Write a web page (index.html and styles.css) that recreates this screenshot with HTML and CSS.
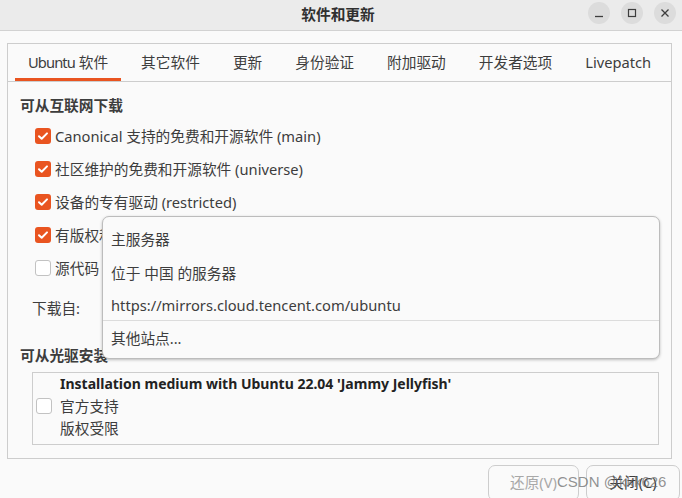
FILE: index.html
```html
<!DOCTYPE html>
<html lang="zh-CN">
  <head>
    <meta charset="UTF-8" />
    <meta name="viewport" content="width=device-width, initial-scale=1.0" />
    <title>软件和更新</title>
    <link rel="stylesheet" href="styles.css">
  </head>
  <body>
    <header class="titlebar">
      <div></div>
      <h1 class="title">软件和更新</h1>
      <div class="controls">
        <span class="ctl">
          <svg width="22" height="22" viewBox="0 0 22 22"><path d="M7 14.5h8" stroke="#3d3d3d" stroke-width="1.3" fill="none"/></svg>
        </span>
        <span class="ctl">
          <svg width="22" height="22" viewBox="0 0 22 22"><rect x="7.5" y="7.5" width="7" height="7" stroke="#3d3d3d" stroke-width="1.2" fill="none"/></svg>
        </span>
        <span class="ctl">
          <svg width="22" height="22" viewBox="0 0 22 22"><path d="M7.5 7.5l7 7M14.5 7.5l-7 7" stroke="#3d3d3d" stroke-width="1.3" fill="none"/></svg>
        </span>
      </div>
    </header>

    <main class="content">
      <div class="notebook">
        <nav class="tabs">
          <span class="tab active"><span class="narrow">Ubuntu</span> 软件</span>
          <span class="tab">其它软件</span>
          <span class="tab">更新</span>
          <span class="tab">身份验证</span>
          <span class="tab">附加驱动</span>
          <span class="tab">开发者选项</span>
          <span class="tab">Livepatch</span>
        </nav>

        <section class="page">
          <h2 class="section-title">可从互联网下载</h2>
          <ul class="options">
            <li class="option">
              <span class="check on"><svg width="16" height="16" viewBox="0 0 16 16"><path d="M4 8.2l2.7 2.6L12 5.4" stroke="#fff" stroke-width="2" fill="none" stroke-linecap="round" stroke-linejoin="round"/></svg></span>
              Canonical 支持的免费和开源软件 (main)
            </li>
            <li class="option">
              <span class="check on"><svg width="16" height="16" viewBox="0 0 16 16"><path d="M4 8.2l2.7 2.6L12 5.4" stroke="#fff" stroke-width="2" fill="none" stroke-linecap="round" stroke-linejoin="round"/></svg></span>
              社区维护的免费和开源软件 (universe)
            </li>
            <li class="option">
              <span class="check on"><svg width="16" height="16" viewBox="0 0 16 16"><path d="M4 8.2l2.7 2.6L12 5.4" stroke="#fff" stroke-width="2" fill="none" stroke-linecap="round" stroke-linejoin="round"/></svg></span>
              设备的专有驱动 (restricted)
            </li>
            <li class="option">
              <span class="check on"><svg width="16" height="16" viewBox="0 0 16 16"><path d="M4 8.2l2.7 2.6L12 5.4" stroke="#fff" stroke-width="2" fill="none" stroke-linecap="round" stroke-linejoin="round"/></svg></span>
              有版权和法律限制的软件 (multiverse)
            </li>
            <li class="option">
              <span class="check"></span>
              源代码
            </li>
          </ul>

          <div class="source-row">
            <span class="source-label">下载自:</span>
            <div class="combo"></div>
          </div>

          <h2 class="section-title cd-title">可从光驱安装</h2>
          <div class="cdrom">
            <span class="check"></span>
            <div class="cdrom-text">
              <div class="medium">Installation medium with Ubuntu 22.04 'Jammy Jellyfish'</div>
              <div>官方支持</div>
              <div>版权受限</div>
            </div>
          </div>
        </section>
      </div>

      <div class="actions">
        <button class="btn revert" disabled>还原(V)</button>
        <button class="btn close">关闭(C)</button>
      </div>
    </main>

    <div class="popup">
      <div class="item">主服务器</div>
      <div class="item">位于 中国 的服务器</div>
      <div class="item current">https://mirrors.cloud.tencent.com/ubuntu</div>
      <div class="sep"></div>
      <div class="item">其他站点...</div>
    </div>

    <div class="watermark">CSDN @kkk626</div>
  </body>
</html>
```

FILE: styles.css
```css
body {
  margin: 0;
  width: 682px;
  height: 498px;
  overflow: hidden;
  position: relative;
  background: #fafafa;
  color: #3d3d3d;
  font-family: "Noto Sans", "Noto Sans CJK SC", sans-serif;
  font-size: 14.7px;
}

.titlebar {
  height: 30px;
  background: #ebebeb;
  border-bottom: 1px solid #d2d2d2;
  display: grid;
  grid-template-columns: 1fr auto 1fr;
  align-items: center;
}

.title {
  margin: 0 6px 3px 0;
  font-size: 14.7px;
  font-weight: bold;
  color: #303030;
}

.controls {
  display: flex;
  justify-content: flex-end;
  gap: 11px;
  padding-right: 6px;
  margin-bottom: 4px;
}

.ctl {
  width: 22px;
  height: 22px;
  border-radius: 50%;
  background: #dcdcdc;
  display: flex;
}

.content {
  padding: 12px 10px 0 7px;
}

.notebook {
  height: 416px;
  box-sizing: border-box;
  border: 1px solid #cdcdcd;
  background: #fafafa;
}

.tabs {
  display: flex;
  gap: 7px;
  padding-left: 7px;
  height: 37px;
  border-bottom: 1px solid #cdcdcd;
}

.tab {
  padding: 0 13px;
  line-height: 37px;
  white-space: nowrap;
  box-sizing: border-box;
  height: 37px;
}

.tab.active {
  border-bottom: 3px solid #e95420;
}

.narrow {
  letter-spacing: -0.9px;
}

.page {
  padding: 0 12px;
}

.section-title {
  margin: 13px 0 4px 0;
  font-size: 14.7px;
  font-weight: bold;
  line-height: 20px;
}

.options {
  list-style: none;
  margin: 0;
  padding: 0 0 0 15px;
}

.option {
  height: 33px;
  display: flex;
  align-items: center;
  gap: 4px;
  white-space: nowrap;
}

.check {
  width: 16px;
  height: 16px;
  box-sizing: border-box;
  border-radius: 3px;
  border: 1px solid #c2c2c2;
  background: #fff;
  flex: none;
  display: flex;
}

.check.on {
  border: none;
  background: #e95420;
}

.source-row {
  display: flex;
  align-items: center;
  height: 34px;
  margin-top: 6px;
  padding-left: 12px;
}

.source-label {
  width: 70px;
}

.combo {
  flex: 1;
}

.cd-title {
  margin-top: 21px;
  margin-bottom: 7px;
}

.cdrom {
  margin-left: 12px;
  border: 1px solid #cdcdcd;
  display: flex;
  align-items: center;
  gap: 8px;
  padding: 0 0 5px 3px;
}

.cdrom-text {
  line-height: 22px;
}

.medium {
  font-weight: bold;
  font-size: 14px;
  color: #222;
}

.actions {
  display: flex;
  justify-content: flex-end;
  gap: 7px;
  margin: 6px -8px 0 0;
}

.btn {
  height: 36px;
  border: 1px solid #cdcdcd;
  border-radius: 7px;
  background: #fafafa;
  color: #3d3d3d;
  font-family: inherit;
  font-size: 14.7px;
  padding: 0 0 4px 0;
}

.revert {
  width: 91px;
  color: #a8a8a8;
}

.close {
  width: 94px;
}

.popup {
  position: absolute;
  left: 102px;
  top: 216px;
  width: 556px;
  padding: 5px 0 3px 0;
  background: #fafafa;
  border: 1px solid #bcbcbc;
  border-radius: 7px;
  box-shadow: 0 1px 3px rgba(0, 0, 0, 0.25);
}

.item {
  height: 34px;
  line-height: 34px;
  padding-left: 8px;
  white-space: nowrap;
}

.item.current {
  height: 30px;
  line-height: 30px;
}

.sep {
  height: 1px;
  background: #dcdcdc;
}

.watermark {
  position: absolute;
  left: 557px;
  top: 473px;
  font-family: "Liberation Sans", "Noto Sans CJK SC", sans-serif;
  font-size: 15px;
  color: rgba(110, 110, 110, 0.75);
  white-space: nowrap;
}
```
